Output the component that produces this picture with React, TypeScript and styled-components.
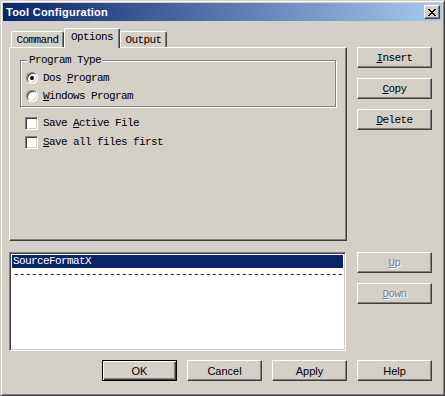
import React from 'react'
import styled, { createGlobalStyle } from 'styled-components'

const face = '#d4d0c8'
const mono = `'Liberation Mono', 'DejaVu Sans Mono', monospace`
const sans = `'Liberation Sans', Arial, sans-serif`

const GlobalStyle = createGlobalStyle`
  html, body {
    margin: 0;
    padding: 0;
    background: ${face};
  }
`

const Window = styled.div`
  box-sizing: border-box;
  width: 445px;
  height: 396px;
  display: flex;
  flex-direction: column;
  background: ${face};
  border: 1px solid;
  border-color: ${face} #404040 #404040 ${face};
  box-shadow: inset 1px 1px #fff, inset -1px -1px #808080;
  padding: 2px;
  font-family: ${mono};
  font-size: 11px;
  letter-spacing: -0.6px;
  color: #000;
`

const TitleBar = styled.div`
  height: 18px;
  display: flex;
  align-items: center;
  justify-content: space-between;
  padding: 0 2px 0 3px;
  background: linear-gradient(to right, #0a246a, #a6caf0);
`

const Title = styled.span`
  font-family: ${sans};
  font-weight: bold;
  font-size: 11px;
  letter-spacing: 0.25px;
  color: #fff;
`

const CloseButton = styled.div`
  box-sizing: border-box;
  width: 16px;
  height: 14px;
  display: flex;
  align-items: center;
  justify-content: center;
  background: ${face};
  border: 1px solid;
  border-color: #fff #404040 #404040 #fff;
  box-shadow: inset -1px -1px #808080;
`

const Body = styled.div`
  flex: 1;
  display: flex;
  flex-direction: column;
  padding: 7px 10px 12px 6px;
`

const Row = styled.div<{ $top?: number }>`
  display: flex;
  gap: 10px;
  margin-top: ${({ $top }) => $top ?? 0}px;
`

const LeftBlock = styled.div`
  width: 338px;
  display: flex;
  flex-direction: column;
`

const TabStrip = styled.div`
  height: 19px;
  display: flex;
  align-items: flex-start;
  padding-left: 2px;
`

const Tab = styled.div<{ $width: number; $active?: boolean }>`
  box-sizing: border-box;
  position: relative;
  z-index: ${({ $active }) => ($active ? 1 : 0)};
  width: ${({ $width }) => $width}px;
  height: ${({ $active }) => ($active ? 20 : 16)}px;
  margin-top: ${({ $active }) => ($active ? 0 : 3)}px;
  display: flex;
  align-items: center;
  justify-content: center;
  padding-bottom: ${({ $active }) => ($active ? 3 : 0)}px;
  background: ${face};
  border: 1px solid;
  border-bottom: none;
  border-color: #fff #404040 #fff #fff;
  border-radius: 2px 2px 0 0;
  box-shadow: inset -1px 0 #808080;
`

const Panel = styled.div`
  box-sizing: border-box;
  height: 194px;
  display: flex;
  flex-direction: column;
  padding: 12px 9px 0 10px;
  border: 1px solid;
  border-color: #fff #404040 #404040 #fff;
  box-shadow: inset -1px -1px #808080;
`

const GroupBox = styled.div`
  box-sizing: border-box;
  position: relative;
  width: 316px;
  display: flex;
  flex-direction: column;
  gap: 6px;
  padding: 11px 0 4px 5px;
  border: 1px solid #808080;
  box-shadow: 1px 1px 0 #fff, inset 1px 1px 0 #fff;
`

const Legend = styled.span`
  position: absolute;
  top: -7px;
  left: 6px;
  padding: 0 1px 0 2px;
  line-height: 13px;
  background: ${face};
`

const Option = styled.label`
  display: flex;
  align-items: center;
  gap: 5px;
  height: 12px;
  line-height: 12px;
`

const Radio = styled.span<{ $checked?: boolean }>`
  box-sizing: border-box;
  width: 12px;
  height: 12px;
  display: flex;
  align-items: center;
  justify-content: center;
  border-radius: 50%;
  background: #fff;
  border: 1px solid;
  border-color: #808080 #fff #fff #808080;
  box-shadow: inset 1px 1px #404040, inset -1px -1px ${face};

  &::after {
    content: '';
    width: 4px;
    height: 4px;
    border-radius: 50%;
    background: ${({ $checked }) => ($checked ? '#000' : 'transparent')};
  }
`

const Checks = styled.div`
  display: flex;
  flex-direction: column;
  gap: 6px;
  margin: 10px 0 0 5px;
`

const CheckRow = styled.label`
  display: flex;
  align-items: center;
  gap: 5px;
  height: 13px;
  line-height: 13px;
`

const CheckBox = styled.span`
  box-sizing: border-box;
  width: 13px;
  height: 13px;
  background: #fff;
  border: 1px solid;
  border-color: #808080 #fff #fff #808080;
  box-shadow: inset 1px 1px #404040, inset -1px -1px ${face};
`

const Key = styled.span`
  text-decoration: underline;
  text-underline-offset: 1px;
`

const ButtonColumn = styled.div<{ $top?: number }>`
  display: flex;
  flex-direction: column;
  gap: 10px;
  padding-top: ${({ $top }) => $top ?? 0}px;
`

const Button = styled.div<{ $sans?: boolean; $default?: boolean; $disabled?: boolean }>`
  box-sizing: border-box;
  width: 75px;
  height: 21px;
  display: flex;
  align-items: center;
  justify-content: center;
  background: ${face};
  font-family: ${({ $sans }) => ($sans ? sans : mono)};
  letter-spacing: ${({ $sans }) => ($sans ? '0' : '-0.6px')};
  font-size: 11px;
  color: ${({ $disabled }) => ($disabled ? '#808080' : '#000')};
  text-shadow: ${({ $disabled }) => ($disabled ? '1px 1px #fff' : 'none')};
  border: 1px solid;
  border-color: ${({ $default }) => ($default ? '#000' : '#fff #404040 #404040 #fff')};
  box-shadow: ${({ $default }) =>
    $default
      ? 'inset 1px 1px #fff, inset -1px -1px #404040, inset -2px -2px #808080'
      : 'inset -1px -1px #808080'};
`

const ListBox = styled.div`
  box-sizing: border-box;
  width: 337px;
  height: 99px;
  margin-right: 1px;
  background: #fff;
  border: 1px solid;
  border-color: #808080 #fff #fff #808080;
  box-shadow: inset 1px 1px #404040, inset -1px -1px ${face};
  padding: 2px 2px 0 2px;
  overflow: hidden;
`

const ListItem = styled.div<{ $selected?: boolean }>`
  height: 13px;
  line-height: 13px;
  padding-left: 1px;
  white-space: nowrap;
  background: ${({ $selected }) => ($selected ? '#0a246a' : 'transparent')};
  color: ${({ $selected }) => ($selected ? '#fff' : '#000')};
`

const Footer = styled.div`
  display: flex;
  justify-content: flex-end;
  gap: 10px;
  margin-top: 9px;
`

const CloseIcon = () => (
  <svg width="8" height="7" viewBox="0 0 8 7" shapeRendering="crispEdges">
    <path d="M0 0h2v1h-2zM6 0h2v1h-2zM1 1h2v1h-2zM5 1h2v1h-2zM2 2h4v1h-4zM3 3h2v1h-2zM2 4h4v1h-4zM1 5h2v1h-2zM5 5h2v1h-2zM0 6h2v1h-2zM6 6h2v1h-2z" fill="#000" />
  </svg>
)

export default function App() {
  return (
    <>
      <GlobalStyle />
      <Window>
        <TitleBar>
          <Title>Tool Configuration</Title>
          <CloseButton>
            <CloseIcon />
          </CloseButton>
        </TitleBar>
        <Body>
          <Row>
            <LeftBlock>
              <TabStrip>
                <Tab $width={53}>Command</Tab>
                <Tab $width={56} $active>
                  Options
                </Tab>
                <Tab $width={47}>Output</Tab>
              </TabStrip>
              <Panel>
                <GroupBox>
                  <Legend>Program Type</Legend>
                  <Option>
                    <Radio $checked />
                    <span>
                      Dos <Key>P</Key>rogram
                    </span>
                  </Option>
                  <Option>
                    <Radio />
                    <span>
                      <Key>W</Key>indows Program
                    </span>
                  </Option>
                </GroupBox>
                <Checks>
                  <CheckRow>
                    <CheckBox />
                    <span>
                      Save <Key>A</Key>ctive File
                    </span>
                  </CheckRow>
                  <CheckRow>
                    <CheckBox />
                    <span>
                      <Key>S</Key>ave all files first
                    </span>
                  </CheckRow>
                </Checks>
              </Panel>
            </LeftBlock>
            <ButtonColumn $top={19}>
              <Button>
                <span>
                  <Key>I</Key>nsert
                </span>
              </Button>
              <Button>
                <span>
                  <Key>C</Key>opy
                </span>
              </Button>
              <Button>
                <span>
                  <Key>D</Key>elete
                </span>
              </Button>
            </ButtonColumn>
          </Row>
          <Row $top={11}>
            <ListBox>
              <ListItem $selected>SourceFormatX</ListItem>
              <ListItem>{'-'.repeat(55)}</ListItem>
            </ListBox>
            <ButtonColumn>
              <Button $disabled>
                <span>
                  <Key>U</Key>p
                </span>
              </Button>
              <Button $disabled>
                <span>
                  <Key>D</Key>own
                </span>
              </Button>
            </ButtonColumn>
          </Row>
          <Footer>
            <Button $sans $default>
              OK
            </Button>
            <Button $sans>Cancel</Button>
            <Button $sans>Apply</Button>
            <Button $sans>Help</Button>
          </Footer>
        </Body>
      </Window>
    </>
  )
}
